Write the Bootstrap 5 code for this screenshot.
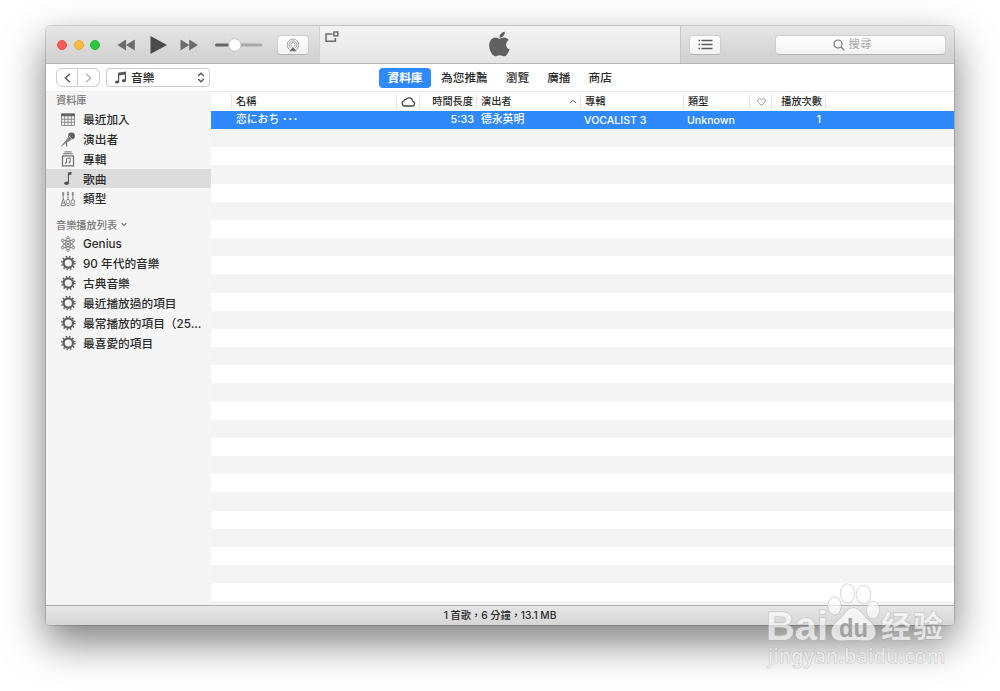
<!DOCTYPE html>
<html lang="zh-Hant">
<head>
    <meta charset="UTF-8">
    <meta name="viewport" content="width=device-width, initial-scale=1.0">
    <title>音樂</title>
    <link href="https://cdn.jsdelivr.net/npm/bootstrap@5.3.0/dist/css/bootstrap.min.css" rel="stylesheet">
    <style>
        body {
            font-family: Inter, "Noto Sans CJK TC", sans-serif;
            font-size: 11.7px;
            line-height: 1;
            color: #2b2b2b;
            background: #fff;
            height: 691px;
            overflow: hidden;
        }
        svg { display: block; flex: none; }
        .app-window {
            width: 908px;
            height: 599px;
            margin: 26px 0 0 46px;
            border-radius: 5px 5px 4px 4px;
            overflow: hidden;
            box-shadow: 0 0 0 1px rgba(0,0,0,.14), 0 17px 40px rgba(0,0,0,.52);
        }
        .title-bar {
            height: 38px;
            background: linear-gradient(#e6e6e6, #cfcfcf);
            border-bottom: 1px solid #b5b5b5;
        }
        .controls-left { width: 273px; padding-left: 11px; }
        .light {
            width: 10px;
            height: 10px;
            border-radius: 50%;
            margin-right: 6.5px;
        }
        .light-red { background: #fc5b57; border: 1px solid #e9504b; }
        .light-yellow { background: #fdbc40; border: 1px solid #e5a93b; }
        .light-green { background: #2bc840; border: 1px solid #27b53a; }
        .tool-btn {
            width: 32px;
            height: 20px;
            background: linear-gradient(#fefefe, #f3f3f3);
            border: 1px solid #cfcfcf;
            border-bottom-color: #b5b5b5;
            border-radius: 4px;
        }
        .airplay-btn { margin-right: 10px; }
        .lcd {
            width: 362px;
            background: linear-gradient(#f3f3f3, #e5e5e5);
            border-left: 1px solid #d2d2d2;
            border-right: 1px solid #c6c6c6;
        }
        .lcd-side { width: 160px; padding: 5px 0 0 5px; }
        .search-box { width: 171px; color: #a8a8a8; font-size: 11.5px; margin-right: 8px; padding-right: 17px; }
        .nav-strip { height: 27px; background: #fff; }
        .strip-left { width: 333px; padding-left: 10px; }
        .hist-btn, .media-select {
            height: 19px;
            border: 1px solid #cdcdcd;
            background: #fff;
        }
        .hist-btn { width: 22px; }
        .media-select { width: 104px; border-radius: 4px; margin-left: 6px; padding: 0 4px 0 7px; font-weight: 500; }
        .media-select span { padding-top: 2px; }
        .tab-item { font-weight: 500; margin-right: 18px; padding-top: 2px; }
        .tab-on {
            width: 52px;
            height: 20px;
            padding-top: 2px;
            margin-right: 10px;
            border-radius: 4px;
            background: #2f89fa;
            color: #fff;
            font-weight: 700;
        }
        .main-area { height: 514px; }
        .side-list { width: 165px; background: #f5f5f5; border-top: 1px solid #ededed; }
        .side-head { height: 17px; padding-left: 10px; font-size: 10.2px; font-weight: 500; color: #7a7a7a; }
        .side-head-second { margin-top: 8.2px; }
        .side-item { height: 19.85px; padding: 4px 0 0 14px; font-weight: 500; white-space: nowrap; }
        .side-item svg { margin: -3.5px 7px 0 0; }
        .side-on { background: #dcdcdc; }
        .song-area { border-top: 1px solid #e9e9e9; }
        .song-grid {
            display: grid;
            grid-template-columns: 21px 165px 23px 57px 104px 103px 66px 22px 54px 1fr;
            align-items: center;
        }
        .song-grid > div { padding-left: 4px; padding-right: 3px; white-space: nowrap; }
        .song-head { height: 19px; font-size: 10.2px; font-weight: 500; background: #fff; }
        .song-head > div {
            height: 15px;
            border-right: 1px solid #e3e3e3;
            display: flex;
            align-items: center;
        }
        .song-head > div:last-child { border-right: 0; }
        .song-row {
            height: 17.7px;
            padding-top: 2px;
            font-size: 10.8px;
            font-weight: 500;
            color: #fff;
            background: #2f89fa;
        }
        .song-row .latin { font-size: 10.6px; padding-left: 3px; }
        .song-row .plays { padding-right: 5px; }
        .stripes { background: repeating-linear-gradient(#f4f4f4 0 18.17px, #fff 18.17px 36.34px); }
        .status-bar {
            height: 20px;
            font-size: 10.2px;
            font-weight: 500;
            background: linear-gradient(#e6e6e6, #d6d6d6);
            border-top: 1px solid #b0b0b0;
        }
        .watermark { position: absolute; left: 760px; top: 578px; }
    </style>
</head>
<body>

<!-- Shared icons -->
<svg width="0" height="0" class="position-absolute">
    <symbol id="gear" viewBox="0 0 16 16">
        <circle cx="8.300" cy="8" r="4.700" fill="none" stroke="#606060" stroke-width="2.200"/>
        <circle cx="8.300" cy="8" r="6.400" fill="none" stroke="#606060" stroke-width="1.800" stroke-dasharray="1.450 1.901"/>
    </symbol>
</svg>

<div class="app-window d-flex flex-column">

    <!-- Title bar -->
    <div class="title-bar d-flex flex-shrink-0">
        <div class="controls-left d-flex align-items-center">
            <span class="light light-red"></span>
            <span class="light light-yellow"></span>
            <span class="light light-green"></span>
            <svg width="150" height="24" viewBox="0 0 150 24" class="ms-2" fill="#6b6b6b">
                <path d="M2.500 12L11 6.500v11zM11 12L19.800 6.500v11z"/>
                <path d="M35.500 3v18L52 12z" fill="#4a4a4a"/>
                <path d="M65.500 6.500v11l8.700-5.500zM74.200 6.500v11L83 12z"/>
                <path d="M101.500 12h18" stroke="#666" stroke-width="3" stroke-linecap="round"/>
                <path d="M120 12h26" stroke="#a9a9a9" stroke-width="3" stroke-linecap="round"/>
                <circle cx="119.800" cy="12" r="6.200" fill="#fff" stroke="#b3b3b3" stroke-width=".7"/>
            </svg>
            <div class="tool-btn airplay-btn d-flex align-items-center justify-content-center ms-auto">
                <svg width="14" height="14" viewBox="0 0 14 14" fill="none" stroke="#9a9a9a" stroke-width=".9">
                    <path d="M3.500 11.500a5.800 5.800 0 1 1 7 0M4.600 9.900a3.900 3.900 0 1 1 4.800 0M5.600 8.300a2.100 2.100 0 1 1 2.800 0"/>
                    <path d="M7 9l3.700 4.300H3.300z" fill="#6a6a6a" stroke="none"/>
                </svg>
            </div>
        </div>
        <div class="lcd d-flex">
            <div class="lcd-side">
                <svg width="14" height="12" viewBox="0 0 14 12" fill="none" stroke="#6d6d6d" stroke-width="1.500">
                    <path d="M7.500 3H1v7.300h9.400V7M8.900.9h3.900v3.900H8.900z"/>
                </svg>
            </div>
            <svg width="40" height="38" viewBox="0 0 40 38">
                <path d="M24.800 5.800c.2 3.200-2.300 6-5.300 6-.4-3 2.500-5.800 5.300-6z" fill="#606060"/>
                <path d="M19.300 12.700c1.200 0 2.700-1.300 5-1.200 1.800.1 3.500.9 4.500 2.400-4 2.500-3.300 7.900.8 9.500-.9 2.500-2.900 6.800-5.300 6.900-1.800.1-2.400-1.100-4.500-1.100s-2.800 1.100-4.500 1.100c-3.300-.1-8.200-9.300-5.200-15 1.300-2.400 3.300-3.700 5.300-3.700s3.100 1.100 3.900 1.100z" fill="#606060"/>
            </svg>
        </div>
        <div class="flex-grow-1 d-flex align-items-center ps-2">
            <div class="tool-btn d-flex align-items-center justify-content-center">
                <svg width="15" height="11" viewBox="0 0 15 11" stroke="#5c5c5c" stroke-width="1.500">
                    <path d="M.5 1.500h1.600M3.500 1.500h11M.5 5.500h1.600M3.500 5.500h11M.5 9.500h1.600M3.500 9.500h11"/>
                </svg>
            </div>
            <div class="tool-btn search-box d-flex align-items-center justify-content-center ms-auto">
                <svg width="12" height="12" viewBox="0 0 12 12" fill="none" stroke="#777" stroke-width="1.200" class="me-1">
                    <circle cx="5" cy="5" r="4"/><path d="M8 8l3.300 3.300"/>
                </svg>
                <span>搜尋</span>
            </div>
        </div>
    </div>

    <!-- Navigation strip -->
    <div class="nav-strip d-flex align-items-center flex-shrink-0">
        <div class="strip-left d-flex">
            <div class="hist-btn rounded-start d-flex align-items-center justify-content-center">
                <svg width="7" height="10" viewBox="0 0 7 10" fill="none" stroke="#555" stroke-width="1.400"><path d="M6 .8L1.300 5 6 9.200"/></svg>
            </div>
            <div class="hist-btn rounded-end border-start-0 d-flex align-items-center justify-content-center">
                <svg width="7" height="10" viewBox="0 0 7 10" fill="none" stroke="#aaa" stroke-width="1.200"><path d="M1 .8L5.700 5 1 9.200"/></svg>
            </div>
            <div class="media-select d-flex align-items-center">
                <svg width="13" height="13" viewBox="0 0 12 13" fill="#555" class="me-1">
                    <path d="M3.500 1.800L11.500.5v9h-1.200V3.600l-5.600.9v6.500H3.500z"/>
                    <ellipse cx="2.600" cy="11" rx="2.200" ry="1.600"/><ellipse cx="9.400" cy="9.700" rx="2.100" ry="1.600"/>
                </svg>
                <span>音樂</span>
                <svg width="8" height="11" viewBox="0 0 8 11" fill="none" stroke="#555" stroke-width="1.300" class="ms-auto"><path d="M1.200 4L4 1.200 6.800 4M1.200 7L4 9.800 6.800 7"/></svg>
            </div>
        </div>
        <div class="tab-on d-flex align-items-center justify-content-center">資料庫</div>
        <div class="tab-item">為您推薦</div>
        <div class="tab-item">瀏覽</div>
        <div class="tab-item">廣播</div>
        <div class="tab-item">商店</div>
    </div>

    <div class="main-area d-flex">

        <!-- Sidebar -->
        <div class="side-list flex-shrink-0">
            <div class="side-head d-flex align-items-center">資料庫</div>
            <div class="side-item d-flex align-items-center">
                <svg width="16" height="15" viewBox="0 0 16 15" fill="none" stroke="#777" stroke-width=".8">
                    <path d="M1.500 2h13v11.500h-13zM1.500 7.300h13M1.500 10.300h13M4.700 4v9.500M8 4v9.500M11.300 4v9.500"/><path d="M1.200 1.600h13.600v2.600H1.200z" fill="#666" stroke="none"/>
                </svg>
                最近加入
            </div>
            <div class="side-item d-flex align-items-center">
                <svg width="16" height="15" viewBox="0 0 16 15" fill="#606060">
                    <circle cx="11.500" cy="4" r="3.400"/><path d="M8 5l3 3.200-4.200 2.400-5.500 4L1 14l4.800-5.500z" fill="#858585"/><path d="M6.500 9.500v5" stroke="#707070" stroke-width="1.200"/><path d="M8.800 3.700l3.400 3.800" stroke="#f5f5f5" stroke-width=".7"/>
                </svg>
                演出者
            </div>
            <div class="side-item d-flex align-items-center">
                <svg width="16" height="16" viewBox="0 0 16 16" fill="none" stroke="#707070">
                    <path d="M4.500.9h7M3.200 2.700h9.600"/><path d="M2.500 4.800h11v10h-11z" stroke-width="1.200"/><path d="M6.600 12V7.600l3.600-.8v4.500" /><path d="M5.200 12h1.200M8.800 11.300H10" stroke-width="1.800"/>
                </svg>
                專輯
            </div>
            <div class="side-item side-on d-flex align-items-center">
                <svg width="16" height="15" viewBox="0 0 16 15" fill="#555">
                    <ellipse cx="6.600" cy="12.300" rx="2.400" ry="1.800"/><path d="M7.900 1.500l3.600-.8v2.900l-2.500.6v8.300H7.900z"/>
                </svg>
                歌曲
            </div>
            <div class="side-item d-flex align-items-center">
                <svg width="16" height="16" viewBox="0 0 16 16" fill="none" stroke="#777" stroke-width=".9">
                    <path d="M3.200 1v7L1 14.800h4.600L3.400 8M1.800 12h3M8 .5v8M12.800 1v8"/>
                    <path d="M8 8.500c-2 0-2 1.800-1.300 2.800-1 1.200-.8 3.500 1.300 3.500s2.300-2.300 1.300-3.500C10 10.300 10 8.500 8 8.500zM12.800 8.800c-1.900 0-1.800 1.600-1.200 2.600-1 1.200-.7 3.400 1.200 3.400s2.500-2.200 1.400-3.400c.6-1 .6-2.600-1.400-2.600z"/>
                    <path d="M2 2h2.400M2 3.800h2.400M6.900 1.800h2.200M6.900 3.500h2.200M11.700 2h2.200M11.700 3.700h2.200M7.200 12.800h1.600M12 12.800h1.600"/>
                </svg>
                類型
            </div>

            <div class="side-head side-head-second d-flex align-items-center">音樂播放列表
                <svg width="6" height="5" viewBox="0 0 6 5" fill="none" stroke="#777" stroke-width="1.200" class="ms-1"><path d="M.7 1.200L3 3.500 5.300 1.200"/></svg>
            </div>
            <div class="side-item d-flex align-items-center">
                <svg width="16" height="16" viewBox="0 0 16 16" fill="none" stroke="#707070" stroke-width=".8">
                    <ellipse cx="8" cy="8" rx="2.400" ry="6.300"/><ellipse cx="8" cy="8" rx="2.400" ry="6.300" transform="rotate(60 8 8)"/><ellipse cx="8" cy="8" rx="2.400" ry="6.300" transform="rotate(120 8 8)"/>
                    <circle cx="8" cy="8" r=".9" fill="#707070"/>
                    <g fill="#f5f5f5"><circle cx="2.600" cy="4.300" r="1.300"/><circle cx="13.400" cy="4.300" r="1.300"/><circle cx="2.600" cy="11.700" r="1.300"/><circle cx="13.400" cy="11.700" r="1.300"/><circle cx="8" cy="1.700" r="1.100"/><circle cx="8" cy="14.300" r="1.100"/></g>
                </svg>
                Genius
            </div>
            <div class="side-item d-flex align-items-center"><svg width="16" height="16"><use href="#gear"/></svg>90 年代的音樂</div>
            <div class="side-item d-flex align-items-center"><svg width="16" height="16"><use href="#gear"/></svg>古典音樂</div>
            <div class="side-item d-flex align-items-center"><svg width="16" height="16"><use href="#gear"/></svg>最近播放過的項目</div>
            <div class="side-item d-flex align-items-center"><svg width="16" height="16"><use href="#gear"/></svg>最常播放的項目（25...</div>
            <div class="side-item d-flex align-items-center"><svg width="16" height="16"><use href="#gear"/></svg>最喜愛的項目</div>
        </div>

        <!-- Song list -->
        <div class="song-area flex-grow-1 d-flex flex-column">
            <div class="song-grid song-head">
                <div></div>
                <div>名稱</div>
                <div>
                    <svg width="15" height="11" viewBox="0 0 15 11" fill="none" stroke="#444" stroke-width="1.300">
                        <path d="M3.500 10a2.700 2.700 0 0 1-.6-5.200A2 2 0 0 1 5 3.400 3.700 3.700 0 0 1 11.700 5 2.600 2.600 0 0 1 11.700 10z"/>
                    </svg>
                </div>
                <div class="justify-content-end">時間長度</div>
                <div>演出者
                    <svg width="8" height="5" viewBox="0 0 8 5" fill="none" stroke="#555" class="ms-auto"><path d="M1 4.200L4 1.200l3 3"/></svg>
                </div>
                <div>專輯</div>
                <div>類型</div>
                <div class="justify-content-center">
                    <svg width="9" height="8" viewBox="0 0 9 8" fill="none" stroke="#8a8a8a" stroke-width=".9"><path d="M4.500 7.300C2 5.600.6 4.200.6 2.600.6.500 3.400 0 4.500 2 5.600 0 8.400.5 8.400 2.600c0 1.600-1.400 3-3.900 4.700z"/></svg>
                </div>
                <div class="justify-content-end">播放次數</div>
                <div></div>
            </div>
            <div class="song-grid song-row">
                <div></div>
                <div>恋におち ･･･</div>
                <div></div>
                <div class="text-end">5:33</div>
                <div>德永英明</div>
                <div class="latin">VOCALIST 3</div>
                <div class="latin">Unknown</div>
                <div></div>
                <div class="text-end plays">1</div>
                <div></div>
            </div>
            <div class="stripes flex-grow-1"></div>
        </div>
    </div>

    <!-- Status bar -->
    <div class="status-bar d-flex align-items-center justify-content-center flex-shrink-0">1 首歌，6 分鐘，13.1 MB</div>
</div>

<!-- Watermark over the window corner -->
<svg class="watermark" width="200" height="100" viewBox="0 0 200 100" fill="#fff" fill-opacity=".68" stroke="#a8a8a8" stroke-opacity=".55" stroke-width="1.200" paint-order="stroke">
    <ellipse cx="74.500" cy="28" rx="6.500" ry="8.800"/>
    <ellipse cx="87.500" cy="15.500" rx="7" ry="9.500"/>
    <ellipse cx="103.500" cy="16.500" rx="7.200" ry="9"/>
    <ellipse cx="113" cy="32" rx="6.500" ry="8.500"/>
    <path d="M93.500 30c5 0 7 3 10 7 4 5 12 9 12 17 0 7-5 9-11 8.500-8-.8-14-.8-22 0-6 .5-11-2-11-8.500 0-8 8-12 12-17 3-4 5-7 10-7z"/>
    <text x="6" y="62" font-family="Liberation Sans, sans-serif" font-weight="700" font-size="40" textLength="62" lengthAdjust="spacingAndGlyphs">Bai</text>
    <text x="79" y="59" font-family="Liberation Sans, sans-serif" font-weight="700" font-size="25" textLength="29" lengthAdjust="spacingAndGlyphs" fill="#999" fill-opacity=".9" stroke="none">du</text>
    <text x="121" y="59" font-family="Noto Sans CJK SC, sans-serif" font-weight="700" font-size="30" textLength="62">经验</text>
    <text x="8" y="85" font-family="Noto Sans, sans-serif" font-size="19.500" textLength="177">jingyan.baidu.com</text>
</svg>

<script src="https://cdn.jsdelivr.net/npm/bootstrap@5.3.0/dist/js/bootstrap.bundle.min.js"></script>
</body>
</html>
